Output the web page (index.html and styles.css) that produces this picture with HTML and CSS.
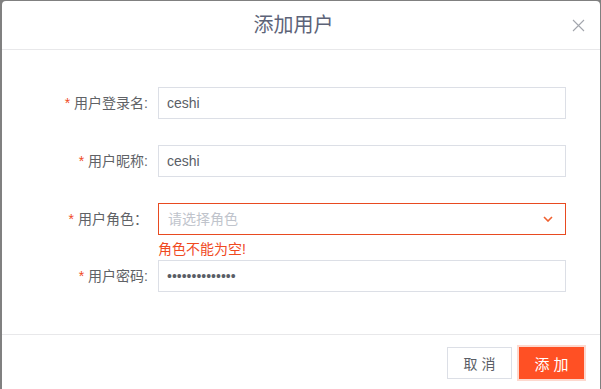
FILE: index.html
```html
<!DOCTYPE html>
<html lang="zh-CN">
<head>
    <meta charset="UTF-8" />
    <meta name="viewport" content="width=device-width, initial-scale=1.0" />
    <title>添加用户</title>
    <link rel="stylesheet" href="styles.css">
</head>
<body class="bg-mask">
    <div class="dialog bg-white rounded-md">

        <header class="dialog-header border-b">
            <span></span>
            <h2 class="dialog-title">添加用户</h2>
            <button type="button" class="close-btn" aria-label="关闭">
                <svg width="13" height="13" viewBox="0 0 13 13" fill="none" stroke="currentColor" stroke-width="1.1">
                    <path d="M1 1l11 11M12 1L1 12" />
                </svg>
            </button>
        </header>

        <form class="dialog-body" onsubmit="return false">
            <div class="form-item flex">
                <label for="loginName" class="form-label"><span class="required">*</span>用户登录名:</label>
                <div class="flex-1">
                    <input id="loginName" class="form-input" type="text" value="ceshi" />
                </div>
            </div>

            <div class="form-item flex">
                <label for="nickName" class="form-label"><span class="required">*</span>用户昵称:</label>
                <div class="flex-1">
                    <input id="nickName" class="form-input" type="text" value="ceshi" />
                </div>
            </div>

            <div class="form-item is-error flex">
                <label class="form-label"><span class="required">*</span>用户角色：</label>
                <div class="flex-1">
                    <div class="form-select flex items-center">
                        <span class="flex-1 placeholder">请选择角色</span>
                        <svg width="10" height="6" viewBox="0 0 10 6" fill="none" stroke="currentColor" stroke-width="1.6">
                            <path d="M1 1l4 4 4-4" />
                        </svg>
                    </div>
                    <div class="form-error">角色不能为空!</div>
                </div>
            </div>

            <div class="form-item flex">
                <label for="password" class="form-label"><span class="required">*</span>用户密码:</label>
                <div class="flex-1">
                    <input id="password" class="form-input" type="password" value="12345678901234" />
                </div>
            </div>
        </form>

        <footer class="dialog-footer border-t flex justify-end">
            <button type="button" class="btn btn-default">取 消</button>
            <button type="button" class="btn btn-primary">添 加</button>
        </footer>
    </div>
</body>
</html>
```

FILE: styles.css
```css
/* 基本样式重置 */
*, ::before, ::after { box-sizing: border-box; }
html { line-height: 1.5; font-family: 'Liberation Sans', 'Noto Sans CJK SC', sans-serif; }
body { margin: 0; height: 389px; overflow: hidden; padding: 1px 0 0 2px; }
button, input { font-family: inherit; }
/* 遮罩和弹窗 */
.bg-mask { background-color: #808080; }
.bg-white { background-color: #ffffff; }
.rounded-md { border-radius: 4px 4px 0 0; }
.dialog { width: 598px; height: 388px; }
.border-b { border-bottom: 1px solid #e8e8ea; }
.border-t { border-top: 1px solid #e8e8ea; }
.flex { display: flex; }
.flex-1 { flex: 1; min-width: 0; }
.items-center { align-items: center; }
.justify-end { justify-content: flex-end; }
/* 标题栏 */
.dialog-header { display: grid; grid-template-columns: 1fr auto 1fr; align-items: center; height: 49px; padding-right: 15px; }
.dialog-title { margin: 0; font-size: 20px; font-weight: 400; color: #5d6378; line-height: 48px; }
.close-btn { justify-self: end; display: flex; padding: 0; margin-top: 1px; border: 0; background: none; color: #a3a6ad; cursor: pointer; }
/* 表单 */
.dialog-body { padding: 37px 34px 42px 0; }
.form-item { margin-bottom: 26px; align-items: flex-start; }
.form-item:last-child { margin-bottom: 0; }
.form-item.is-error { margin-bottom: 0; }
.form-label { width: 156px; padding-right: 10px; text-align: right; font-size: 14px; line-height: 32px; color: #606266; }
.required { color: #f04a1f; margin-right: 4px; }
.form-input { display: block; width: 100%; height: 32px; padding: 0 8px; border: 1px solid #dcdfe6; border-radius: 0; font-size: 14px; color: #5a5e66; outline: none; background: #fff; }
.form-select { height: 32px; padding: 0 12px 0 9px; border: 1px solid #e84a20; color: #f0602f; font-size: 14px; }
.placeholder { color: #c0c4cc; }
.form-error { height: 25px; padding-top: 3px; font-size: 14px; line-height: 22px; color: #f04a1f; }
/* 底部按钮 */
.dialog-footer { gap: 7px; padding: 12px 16px 0 0; }
.btn { height: 32px; padding: 0; font-size: 14px; border-radius: 0; cursor: pointer; }
.btn-default { width: 65px; border: 1px solid #dcdfe6; background: #fff; color: #5a5e66; }
.btn-primary { width: 65px; border: 0; background: #ff5024; color: #fff; font-size: 15px; box-shadow: 0 0 0 2px #fdd9cf; }
```
